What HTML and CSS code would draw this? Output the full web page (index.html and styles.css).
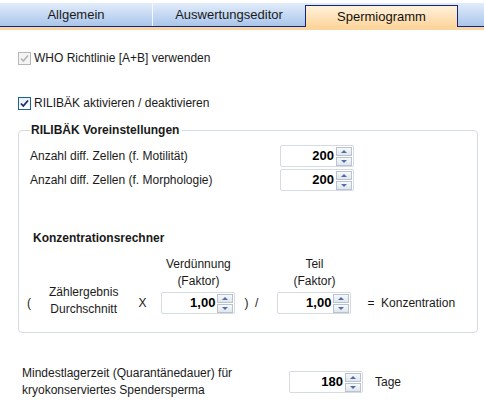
FILE: index.html
```html
<!DOCTYPE html>
<html>
<head>
	<meta name="viewport" content="width=device-width, initial-scale=1">
	<link rel="stylesheet" href="styles.css">
</head>
<body>
	<div class="tabs">
		<div class="tab">Allgemein</div>
		<div class="tab sep">Auswertungseditor</div>
		<div class="tab active">Spermiogramm</div>
	</div>

	<div class="page">
		<label class="check who disabled">
			<span class="box"><svg width="11" height="11" viewBox="0 0 11 11"><path d="M2 5.5 L4.3 8 L9 2.5" fill="none" stroke="#b4b4b4" stroke-width="1.6"/></svg></span>
			WHO Richtlinie [A+B] verwenden
		</label>

		<label class="check rili">
			<span class="box on"><svg width="11" height="11" viewBox="0 0 11 11"><path d="M2 5.5 L4.3 8 L9 2.5" fill="none" stroke="#1b2a6b" stroke-width="1.8"/></svg></span>
			RILIBÄK aktivieren / deaktivieren
		</label>

		<fieldset class="group">
			<legend>RILIBÄK Voreinstellungen</legend>

			<div class="setting">
				<span class="lbl">Anzahl diff. Zellen (f. Motilität)</span>
				<div class="spin"><span class="val">200</span><span class="btns"><i class="up"></i><i class="down"></i></span></div>
			</div>
			<div class="setting">
				<span class="lbl">Anzahl diff. Zellen (f. Morphologie)</span>
				<div class="spin"><span class="val">200</span><span class="btns"><i class="up"></i><i class="down"></i></span></div>
			</div>

			<h4 class="sub">Konzentrationsrechner</h4>

			<div class="calc">
				<span class="op paren">(</span>
				<span class="two zg">Zählergebnis<br>Durchschnitt</span>
				<span class="op x">X</span>
				<div class="col">
					<span class="cap">Verdünnung<br>(Faktor)</span>
					<div class="spin"><span class="val">1,00</span><span class="btns"><i class="up"></i><i class="down"></i></span></div>
				</div>
				<span class="op close">)&nbsp;&nbsp;/</span>
				<div class="col">
					<span class="cap">Teil<br>(Faktor)</span>
					<div class="spin"><span class="val">1,00</span><span class="btns"><i class="up"></i><i class="down"></i></span></div>
				</div>
				<span class="op eq">=&nbsp;&nbsp;Konzentration</span>
			</div>
		</fieldset>

		<div class="storage">
			<span class="two">Mindestlagerzeit (Quarantänedauer) für<br>kryokonserviertes Spendersperma</span>
			<div class="spin"><span class="val">180</span><span class="btns"><i class="up"></i><i class="down"></i></span></div>
			<span class="unit">Tage</span>
		</div>
	</div>
</body>
</html>
```

FILE: styles.css
```css
body {
	margin:0;
	font-family:"Liberation Sans", Arial, sans-serif;
	font-size:12px;
	color:#1a1a1a;
	background:#fff;
}

/* tab strip */
.tabs {
	display:flex;
	margin-top:3px;
	height:23px;
	background:linear-gradient(#e2ecf9, #a9c6ec);
	border-bottom:1px solid #13237e;
	box-shadow:0 3px 0 #fbd59e;
	font-size:13px;
}

.tab {
	width:152px;
	text-align:center;
	line-height:23px;
	position:relative;
}

.tab.sep {
	border-left:1px solid #f3f8ff;
}

.tab.active {
	width:151px;
	margin-top:2px;
	margin-bottom:-1px;
	line-height:21px;
	border:1px solid #13237e;
	border-bottom:none;
	background:linear-gradient(#fff2dc, #fdd59c);
	color:#111;
}

.page {
	padding:24px 6px 0 18px;
}

/* checkboxes */
.check {
	display:flex;
	align-items:center;
	gap:3px;
	height:14px;
}

.check.rili {
	margin-top:31px;
}

.box {
	width:11px;
	height:11px;
	border:1px solid #b7b7b7;
	background:#f4f4f4;
	display:flex;
}

.box.on {
	border-color:#1f5f99;
	background:linear-gradient(#e6eef7, #fff);
}

/* group box */
.group {
	margin:13px 0 0 0;
	padding:6px 11px 0 11px;
	height:202px;
	border:1px solid #d5dde4;
	border-radius:4px;
}

.group legend {
	font-weight:bold;
	padding:0 3px 0 1px;
	font-size:12px;
}

.setting {
	display:flex;
	align-items:center;
	height:22px;
	margin-top:2px;
}

.setting .lbl {
	width:250px;
}

.sub {
	margin:40px 0 0 3px;
	font-size:12px;
	font-weight:bold;
}

/* spin boxes */
.spin {
	display:flex;
	width:70px;
	height:20px;
	border:1px solid #d4dbe2;
	border-radius:2px;
	background:#fff;
	padding:0 1px;
	box-sizing:content-box;
}

.spin .val {
	flex:1;
	text-align:right;
	font-weight:bold;
	font-size:13px;
	line-height:20px;
	padding-right:2px;
	color:#000;
}

.spin .btns {
	display:flex;
	flex-direction:column;
	justify-content:center;
	gap:1px;
	width:16px;
}

.spin i {
	height:9px;
	border:1px solid #b9c3cf;
	background:linear-gradient(#f7f9fb, #e1e6ec);
	display:flex;
	align-items:center;
	justify-content:center;
	box-sizing:border-box;
}

.spin i::after {
	content:"";
	border-left:3px solid transparent;
	border-right:3px solid transparent;
}

.spin i.up::after {
	border-bottom:3px solid #4d6ea8;
}

.spin i.down::after {
	border-top:3px solid #4d6ea8;
}

/* concentration calculator */
.calc {
	display:flex;
	align-items:flex-end;
	margin-top:11px;
}

.calc .op {
	line-height:22px;
}

.calc .paren {
	margin-left:-3px;
}

.two {
	line-height:17px;
}

.calc .zg {
	text-align:center;
	margin:0 0 -4px 18px;
}

.calc .x {
	margin-left:20px;
}

.col {
	display:flex;
	flex-direction:column;
	align-items:center;
}

.col .cap {
	text-align:center;
	line-height:17px;
	margin-bottom:2px;
}

.calc .x + .col {
	margin-left:15px;
}

.calc .close {
	margin-left:9px;
}

.calc .close + .col {
	margin-left:19px;
}

.calc .eq {
	margin-left:16px;
}

/* storage time */
.storage {
	display:flex;
	align-items:center;
	margin:32px 0 0 4px;
}

.storage .two {
	width:267px;
}

.storage .unit {
	margin-left:12px;
}
```
